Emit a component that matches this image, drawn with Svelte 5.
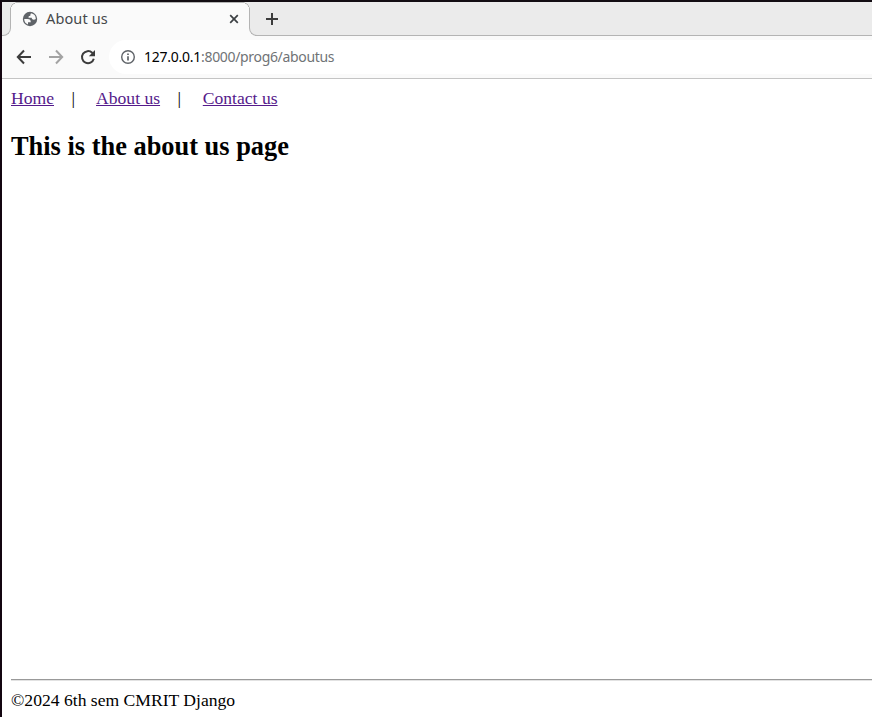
<script>
  const links = ['Home', 'About us', 'Contact us'];
</script>

<div class="window">
  <div class="tabs">
    <div class="strip-left"></div>
    <div class="tab">
      <svg class="globe" width="16" height="16" viewBox="0 0 16 16">
        <circle cx="8" cy="8" r="7.2" fill="#5f6368" />
        <path d="M2.2 8h3.4c2.2 0 3.2 1.2 3.2 3.2H6v2.3A5.9 5.9 0 0 1 2.2 8z" fill="#fafafa" />
        <path d="M9 2.3A5.9 5.9 0 0 1 13.8 8c-1.1 1-2.8.9-3.4.3-.5-.5-.7-1-.7-1.5H6.6c-.3-1.3.3-2 1.7-2.1 0-.8.1-1.6.7-2.4z" fill="#fafafa" />
      </svg>
      <span class="title">About us</span>
      <svg class="close" width="10" height="10" viewBox="0 0 10 10"><path d="m1.2 1.2 7.6 7.6M8.8 1.2 1.2 8.8" stroke="#3c4043" stroke-width="1.7" /></svg>
    </div>
    <div class="strip-right">
      <svg width="12" height="12" viewBox="0 0 12 12"><path d="M6 0v12M0 6h12" stroke="#3c3c3c" stroke-width="2" /></svg>
    </div>
  </div>
  <div class="toolbar">
    <svg width="16" height="16" viewBox="0 0 16 16"><path d="M15 8H2M8 1.5 1.8 8 8 14.5" fill="none" stroke="#3c3c3c" stroke-width="2" /></svg>
    <svg width="16" height="16" viewBox="0 0 16 16"><path d="M1 8h13M8 1.5 14.2 8 8 14.5" fill="none" stroke="#a3a3a3" stroke-width="2" /></svg>
    <svg width="16" height="16" viewBox="0 0 16 16"><path d="M13.8 9.7A6 6 0 1 1 12.2 3.8L13.5 5" fill="none" stroke="#3c3c3c" stroke-width="2" /><path d="M15 1v6.2H8.8z" fill="#3c3c3c" /></svg>
    <div class="address">
      <svg width="16" height="16" viewBox="0 0 16 16"><circle cx="8" cy="8" r="6.3" fill="none" stroke="#5f6368" stroke-width="1.4" /><path d="M8 7.2v4.2M8 4.5V6" stroke="#5f6368" stroke-width="1.7" /></svg>
      <span class="url"><span class="host">127.0.0.1</span><span class="path">:8000/prog6/aboutus</span></span>
    </div>
  </div>
  <main>
    <nav>
      {#each links as link, i}
        {#if i}<span class="sep">|</span>{/if}<a href="#top">{link}</a>
      {/each}
    </nav>
    <h2>This is the about us page</h2>
    <footer>©2024 6th sem CMRIT Django</footer>
  </main>
</div>

<style>
  :global(body) { margin: 0; overflow: hidden; }
  .window {
    box-sizing: border-box;
    width: 872px;
    height: 717px;
    border-top: 2px solid #130d13;
    border-left: 2px solid #130510;
    display: flex;
    flex-direction: column;
    background: #fff;
  }
  svg { display: block; flex: none; }
  .tabs { display: flex; height: 34px; background: #fafafa; flex: none; }
  .strip-left, .strip-right, .tab { box-sizing: border-box; }
  .strip-left {
    width: 9px;
    background: #ebebeb;
    border: solid #b4b4b4;
    border-width: 0 1px 1px 0;
    border-radius: 0 0 8px 0;
  }
  .tab {
    width: 238px;
    display: flex;
    align-items: center;
    padding: 0 10px 1px 11px;
    background: #fafafa;
    border-top: 1px solid #b4b4b4;
    position: relative;
  }
  .tab::before, .tab::after {
    content: '';
    position: absolute;
    top: -1px;
    width: 8px;
    height: 8px;
  }
  .tab::before { left: -1px; background: radial-gradient(circle at 8px 8px, #fafafa 7px, #b4b4b4 7.4px, #b4b4b4 7.7px, #ebebeb 8.2px); }
  .tab::after { right: -1px; background: radial-gradient(circle at 0 8px, #fafafa 7px, #b4b4b4 7.4px, #b4b4b4 7.7px, #ebebeb 8.2px); }
  .title {
    margin: -2px 0 0 8px;
    font: 14.5px 'Noto Sans', sans-serif;
    line-height: 20px;
    letter-spacing: 0.12px;
    color: #45484b;
    width: 100px;
    white-space: nowrap;
  }
  .close { margin-left: auto; }
  .strip-right {
    flex: 1;
    background: #ebebeb;
    border: solid #b4b4b4;
    border-width: 0 0 1px 1px;
    border-radius: 0 0 0 8px;
    padding: 11px 0 0 16px;
  }
  .toolbar {
    box-sizing: border-box;
    height: 43px;
    flex: none;
    display: flex;
    align-items: center;
    gap: 16px;
    padding-left: 14px;
    background: #fafafa;
    border-bottom: 1px solid #c4c4c4;
  }
  .address {
    flex: 1;
    height: 34px;
    margin-left: -3px;
    border-radius: 17px 0 0 17px;
    background: #fff;
    display: flex;
    align-items: center;
    padding-left: 11px;
    gap: 8px;
  }
  .url { font: 14px/20px 'Noto Sans', sans-serif; white-space: nowrap; }
  .host { color: #000; letter-spacing: -0.25px; }
  .path { color: #707376; letter-spacing: -0.33px; }
  main {
    flex: 1;
    display: flex;
    flex-direction: column;
    padding-left: 9px;
    font: 17.6px/20px 'Liberation Serif', 'Times New Roman', serif;
    color: #000;
  }
  nav { display: flex; margin-top: 9px; height: 20px; }
  a { color: #551a8b; }
  .sep { margin: 0 21px 0 17.5px; }
  a:last-child { margin-left: 0.7px; }
  h2 { margin: 23px 0 0; font-size: 26.4px; line-height: 30px; }
  footer { margin-top: auto; border-top: 1px solid #999; box-shadow: inset 0 1px #e2e2e2; padding: 10px 0 7px; }
</style>
